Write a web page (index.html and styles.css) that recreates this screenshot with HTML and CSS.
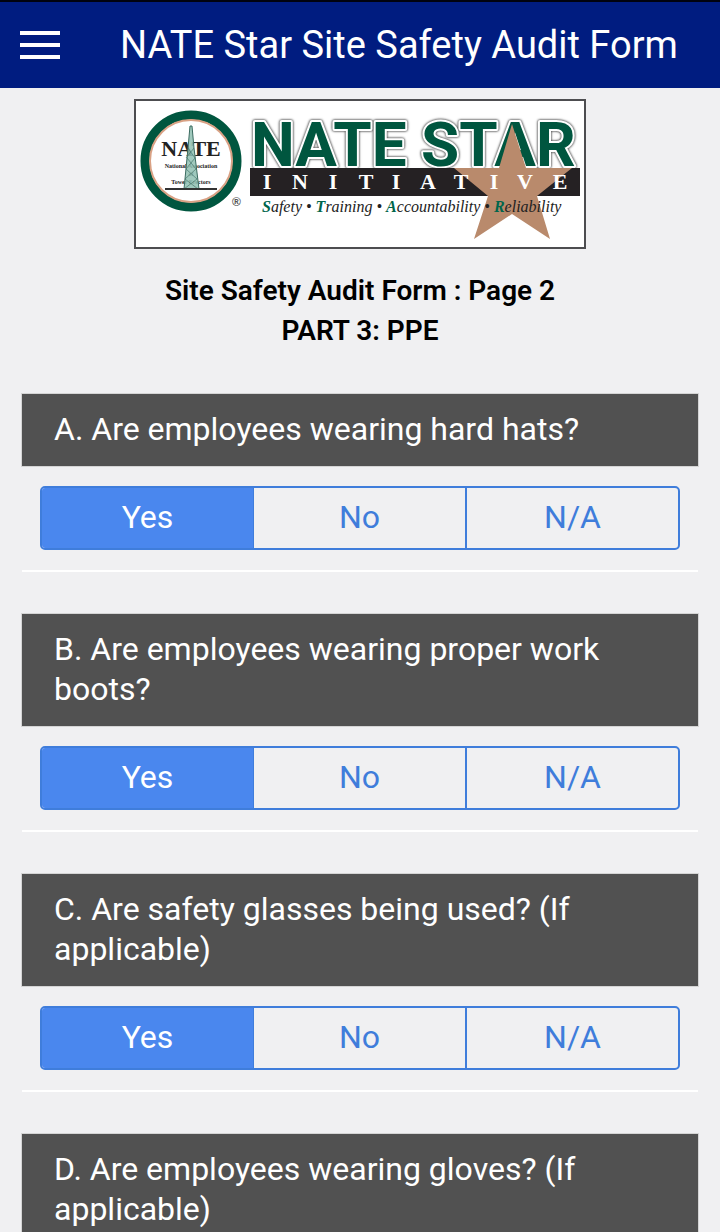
FILE: index.html
```html
<!DOCTYPE html>
<html lang="en">
<head>
  <meta charset="UTF-8">
  <meta name="viewport" content="width=device-width, initial-scale=1.0">
  <title>NATE Star Site Safety Audit Form</title>
  <link rel="stylesheet" href="styles.css">
</head>
<body>
  <header class="topbar">
    <button type="button" class="menu-btn" aria-label="Menu">
      <span></span><span></span><span></span>
    </button>
    <h1>NATE Star Site Safety Audit Form</h1>
  </header>

  <main>
    <div class="logo">
      <svg viewBox="0 0 448 146" role="img" aria-label="NATE Star Initiative">
        <!-- seal -->
        <circle cx="55" cy="60" r="46" fill="#fff" stroke="#00563f" stroke-width="9"/>
        <circle cx="55" cy="60" r="41" fill="none" stroke="#d9a184" stroke-width="2"/>
        <g class="seal" text-anchor="middle">
          <text class="seal-name" x="55" y="55">NATE</text>
          <text x="55" y="67">National Association</text>
          <text x="55" y="75">of</text>
          <text x="55" y="83">Tower Erectors</text>
        </g>
        <path d="M54 25h2l2 22 5 41H48l4-41z" fill="#8fbfb2" fill-opacity=".85" stroke="#3b6b60" stroke-width="1"/>
        <path d="M52 47l7 10M58 47l-8 10M51 57l9 11M59 57l-9 11M50 68l11 10M60 68L49 78M49 78l13 10M61 78l-13 10" stroke="#3b6b60" stroke-width="1" stroke-opacity=".6"/>
        <path d="M29 88h52" stroke="#333" stroke-width="2"/>
        <text class="reg" x="96" y="105">®</text>
        <!-- wordmark -->
        <g class="wordmark">
          <text x="115" y="65">NATE</text>
          <text x="285" y="65">STAR</text>
        </g>
        <path d="M114 67h330v28H114z" fill="#252123"/>
        <path d="M376 23l14 44h46l-35 28 13 43-38-25-38 25 14-43-34-28h45z" fill="#b98a6c"/>
        <text class="initiative" text-anchor="middle" y="88" x="131 164 197 230 260 292 325 358 389 424">INITIATIVE</text>
        <text class="tagline" x="126" y="111"><tspan>S</tspan>afety • <tspan>T</tspan>raining • <tspan>A</tspan>ccountability • <tspan>R</tspan>eliability</text>
      </svg>
    </div>

    <h2>Site Safety Audit Form : Page 2<br>PART 3: PPE</h2>

    <form>
      <section class="question" role="radiogroup" aria-labelledby="qa">
        <h3 id="qa">A. Are employees wearing hard hats?</h3>
        <div class="segment">
          <label><input type="radio" name="a" checked><span>Yes</span></label>
          <label><input type="radio" name="a"><span>No</span></label>
          <label><input type="radio" name="a"><span>N/A</span></label>
        </div>
      </section>

      <section class="question" role="radiogroup" aria-labelledby="qb">
        <h3 id="qb">B. Are employees wearing proper work boots?</h3>
        <div class="segment">
          <label><input type="radio" name="b" checked><span>Yes</span></label>
          <label><input type="radio" name="b"><span>No</span></label>
          <label><input type="radio" name="b"><span>N/A</span></label>
        </div>
      </section>

      <section class="question" role="radiogroup" aria-labelledby="qc">
        <h3 id="qc">C. Are safety glasses being used? (If applicable)</h3>
        <div class="segment">
          <label><input type="radio" name="c" checked><span>Yes</span></label>
          <label><input type="radio" name="c"><span>No</span></label>
          <label><input type="radio" name="c"><span>N/A</span></label>
        </div>
      </section>

      <section class="question" role="radiogroup" aria-labelledby="qd">
        <h3 id="qd">D. Are employees wearing gloves? (If applicable)</h3>
      </section>
    </form>
  </main>
</body>
</html>
```

FILE: styles.css
```css
* { margin: 0; padding: 0; box-sizing: border-box; }
body {
  font-family: Roboto, sans-serif;
  background: #f0f0f2;
  color: #000;
}
.topbar {
  display: flex;
  align-items: center;
  gap: 60px;
  height: 88px;
  padding: 0 20px;
  background: #001c80;
  border-top: 2px solid #00020f;
  color: #fff;
}
.topbar h1 {
  font-size: 38px;
  font-weight: 400;
  white-space: nowrap;
}
.menu-btn {
  display: flex;
  flex-direction: column;
  gap: 8px;
  width: 40px;
  background: none;
  border: none;
  cursor: pointer;
}
.menu-btn span {
  width: 100%;
  height: 4px;
  background: #fff;
}
main { padding: 11px 22px 0; }

/* logo */
.logo {
  max-width: 452px;
  margin: 0 auto;
  border: 2px solid #4d4d50;
  background: #fff;
}
.logo svg { display: block; width: 100%; }
.seal {
  font: bold 6px "Liberation Serif", serif;
  fill: #222;
}
.seal-name { font-size: 22px; }
.reg { font: bold 12px "Liberation Sans", sans-serif; fill: #555; }
.wordmark {
  font: bold 62px Roboto, sans-serif;
  fill: #00563f;
  stroke: #fff;
  stroke-width: 4px;
  stroke-linejoin: round;
  paint-order: stroke;
  filter: drop-shadow(0 0 1px #444) drop-shadow(0 0 1px #999);
}
.initiative { font: bold 22px "Liberation Serif", serif; fill: #fff; }
.tagline { font: italic 16px "Liberation Serif", serif; fill: #222; }
.tagline tspan { font-weight: bold; fill: #00664c; }

h2 {
  margin: 22px 0 43px;
  font-size: 28px;
  font-weight: 600;
  line-height: 40px;
  text-align: center;
}

/* questions */
.question {
  margin-bottom: 42px;
  border-bottom: 2px solid #fff;
}
.question h3 {
  padding: 15px 32px 17px;
  background: #515151;
  box-shadow: 0 0 0 1px #d4d4d4;
  color: #fff;
  font-size: 32px;
  font-weight: 400;
  line-height: 40px;
}
.segment {
  display: flex;
  height: 64px;
  margin: 20px 18px;
  border: 2px solid #3f7ddb;
  border-radius: 5px;
  overflow: hidden;
}
.segment label {
  flex: 1;
  position: relative;
  cursor: pointer;
}
.segment label + label { border-left: 2px solid #3f7ddb; }
.segment label:nth-child(2) { border-left-width: 1px; }
.segment input {
  position: absolute;
  inset: 0;
  appearance: none;
}
.segment span {
  display: block;
  position: relative;
  height: 60px;
  color: #3f7ddb;
  font-size: 32px;
  line-height: 58px;
  text-align: center;
}
.segment input:checked + span {
  background: #4a87ee;
  color: #fff;
}
```
